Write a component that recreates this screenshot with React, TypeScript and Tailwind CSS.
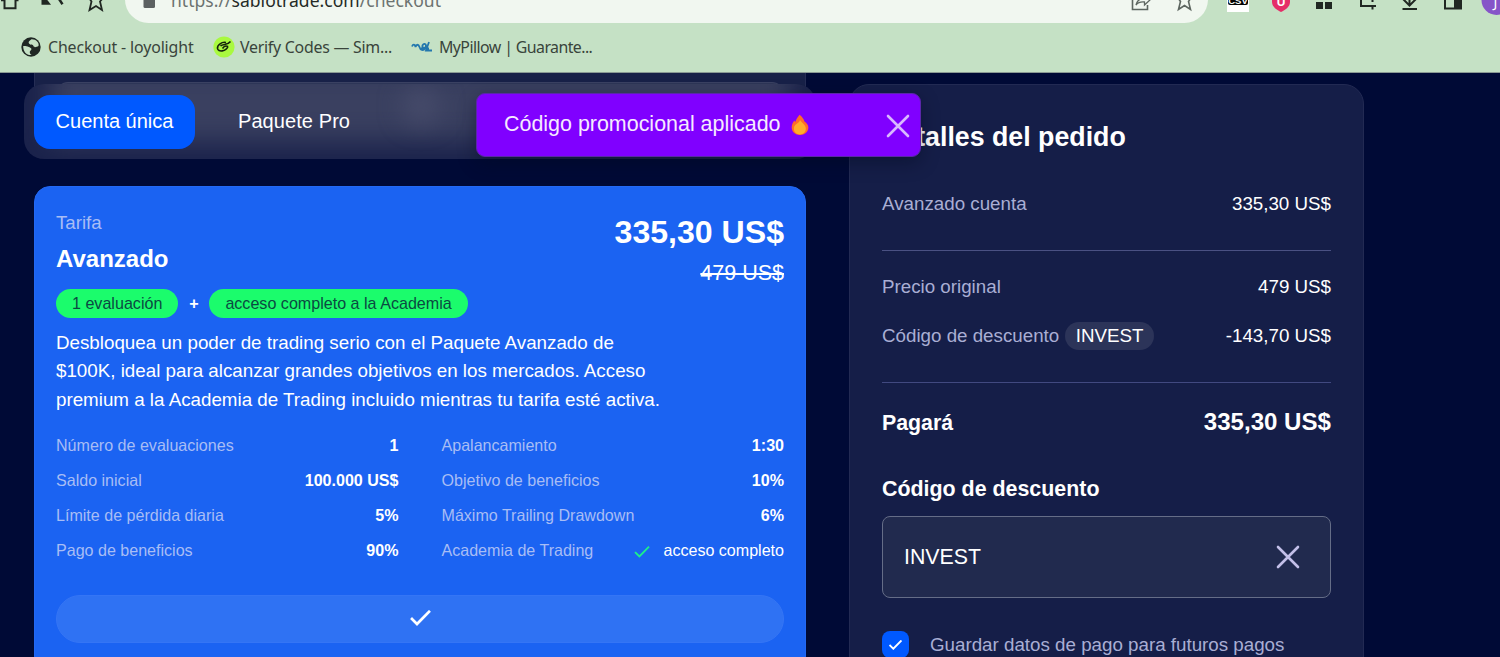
import type { ReactNode } from "react";

type Stat = { label: string; value: string };

const leftStats: Stat[] = [
  { label: "Número de evaluaciones", value: "1" },
  { label: "Saldo inicial", value: "100.000 US$" },
  { label: "Límite de pérdida diaria", value: "5%" },
  { label: "Pago de beneficios", value: "90%" },
];

const rightStats: Stat[] = [
  { label: "Apalancamiento", value: "1:30" },
  { label: "Objetivo de beneficios", value: "10%" },
  { label: "Máximo Trailing Drawdown", value: "6%" },
];

const Cross = ({ className }: { className: string }) => (
  <svg viewBox="0 0 24 24" className={className} fill="none" stroke="currentColor" strokeWidth="2.6" strokeLinecap="round">
    <path d="M2 2 22 22M22 2 2 22" />
  </svg>
);

const Check = ({ className }: { className: string }) => (
  <svg viewBox="0 0 20 16" className={className} fill="none" stroke="currentColor" strokeLinecap="square">
    <path d="M1.5 9 6.5 14 18.5 1.8" />
  </svg>
);

const Flame = () => (
  <svg viewBox="0 0 20 23" className="w-[18px] h-[22px]">
    <path d="M9.500 0C12.500 2.500 14 4.500 15 7.500C17.500 9 19.300 11.500 19.300 14.500C19 19.500 15 22.500 10 22.500C5 22.500 1 19.500 .8 14.500C.7 11.500 2 8.500 3.800 6.500C4 7.300 4.400 7.800 5 8C5.500 5 7.500 2.500 9.500 0Z" fill="#ff6a2b" />
    <path d="M10 6C12 9 16.500 11.500 16.500 15.500C16.500 19.500 13.800 22 10 22C6 22 3.200 19.500 3.200 15.500C3.200 13 4.500 11.500 6 10.500C7.500 9.500 9.300 8.500 10 6Z" fill="#ffad2b" />
  </svg>
);

const Toolbar = () => (
  <div className="flex h-[23px] overflow-hidden text-[#202722]">
    <div className="w-[125px] shrink-0">
      <svg width="125" height="23" fill="none" stroke="currentColor" strokeWidth="2">
        <path d="M4.500 -2V8.200H15.500V-2M1 .3H5M15 .3H18.500" />
        <path d="M41.500 -3H45L51 4.700H41.500Z" fill="currentColor" stroke="none" />
        <path d="M57 -4 62.500 4.200" strokeWidth="2.500" />
        <path d="M89 -2 91.500 1.500 89.500 10 96 6 102 10 100 1.500 103 -2" strokeWidth="1.800" />
      </svg>
    </div>
    <div className="w-[1083px] h-[47px] -mt-[24px] shrink-0 rounded-full bg-[#f1f7f0] flex items-end">
      <svg width="46" height="23" className="shrink-0">
        <rect x="18.500" y="-8" width="11.500" height="16" rx="1.500" fill="#5c6161" />
      </svg>
      <p className="h-[35px] w-[960px] text-[17.5px] tracking-[0.03px] leading-[24px] font-['Noto_Sans'] text-[#6c7370] whitespace-nowrap">
        https://<span className="text-[#252b27]">sabiotrade.com</span>/checkout
      </p>
      <svg width="77" height="23" className="shrink-0" fill="none" stroke="#5d6660" strokeWidth="1.600">
        <path d="M1.500 -2V9.500H16.500V5" />
        <path d="M5 5C6 1 9 -1.500 12.500 -1.500V-6L20 -1 13.500 5V2C9 1.500 7 2.500 5 5Z" strokeWidth="1.300" />
        <path d="M47 -2 49.500 1.500 47.500 9.500 53.500 5.500 59.500 9.500 57.500 1.500 60 -2" />
      </svg>
    </div>
    <div className="flex grow">
      <svg width="292" height="23">
        <rect x="19" y="-4" width="22" height="16" fill="#fff" />
        <rect x="20" y="-10" width="20" height="15" rx="2" fill="#050505" />
        <text x="30" y="3.500" fill="#fff" fontSize="9.500" fontWeight="700" fontFamily="Liberation Sans" textAnchor="middle">CSV</text>
        <path d="M64 -4H82V2C82 7 77 10 73 12C69 10 64 7 64 2Z" fill="#e52d68" />
        <text x="73" y="6" fill="#fff" fontSize="12" fontWeight="700" fontFamily="Liberation Sans" textAnchor="middle">U</text>
        <path d="M108 2h7v7h-7zM117 2h7v7h-7z" fill="#202722" />
        <g fill="none" stroke="#202722" strokeWidth="2">
          <path d="M153 -4V6H168M164.500 -4V2M164.500 5V9.500" />
          <path d="M201.500 -4V5M195 -1 201.500 5.500 208 -1M194.500 9H209" />
          <path d="M237 -4V8.500H253V-4" />
        </g>
        <rect x="246" y="-4" width="7" height="13" fill="#202722" />
        <circle cx="288.500" cy="0" r="15" fill="#8654c8" />
        <text x="285.500" y="6.500" fill="#fff" fontSize="14" fontFamily="Noto Sans">J</text>
      </svg>
    </div>
  </div>
);

const Bookmarks = () => (
  <div className="flex h-[48px] items-center pl-[21px] text-[15.9px] leading-[22px] font-['Noto_Sans'] text-[#39443b] whitespace-nowrap">
    <div className="flex w-[192px] items-center">
      <svg viewBox="0 0 20 20" className="w-5 h-5 mr-[7px]">
        <circle cx="10" cy="10" r="9.700" fill="#1f2723" />
        <path d="M10.500 2.200C8 4 7 5 8 6.500C9.500 8.500 12 7 12.500 9C13 11 15.500 10 17.500 9C18.500 5.500 15 2 10.500 2.200Z" fill="#c5e1c5" />
        <path d="M2.200 9C5 9 8.500 9.500 10 11.200C11.500 13 8.500 13.500 8.800 15.500C9 17 10 17.500 10.500 18C6 18.500 2 15 2.200 9Z" fill="#c5e1c5" />
      </svg>
      <span className="tracking-[-0.13px]">Checkout - loyolight</span>
    </div>
    <div className="flex w-[198px] items-center">
      <svg viewBox="0 0 22 22" className="w-[22px] h-[22px] mr-[5px]">
        <circle cx="11" cy="11" r="10.600" fill="#a9f93f" />
        <path d="M13 6.500C9 5.500 4 9 4.500 12.500C5 16.500 13 15.500 15 10.500M15 10.500C13 9.500 11 10 9.500 12.500M7.500 10C10 7.500 14.500 9.500 17.500 5.500" fill="none" stroke="#15210c" strokeWidth="1.600" />
      </svg>
      <span className="tracking-[-0.25px]">Verify Codes — Sim...</span>
    </div>
    <div className="flex items-center">
      <svg viewBox="0 0 22 14" className="w-[22px] h-[14px] mr-[6px]" fill="none" stroke="#2377ae" strokeWidth="1.8">
        <path d="M1 6.500C2 4 4 4 4.500 7C5.500 4 7.500 4 8.500 7C9.500 10.500 12 11 14 8.500C10 8 11 3.500 14 4C16 4.500 14.500 8 12.500 10M18 2 15 10.500H21M10 8.500H18" />
      </svg>
      <span className="tracking-[-0.58px]">MyPillow | Guarante...</span>
    </div>
  </div>
);

const StatRow = ({ label, children }: { label: string; children: ReactNode }) => (
  <div className="flex h-[35px] items-center justify-between">
    <span className="text-[#a8bdf5]">{label}</span>
    {children}
  </div>
);

const Tabs = () => (
  <div className="relative -ml-[10px] -mt-[9px] flex h-[75px] w-[792px] items-center overflow-hidden rounded-[20px] bg-[#1a224b] px-[10px] text-[20px] text-white">
    <div className="absolute left-[26px] right-[26px] -top-5 h-[78px] bg-[#3a4060] blur-[14px]" />
    <div className="absolute left-[379px] top-[4px] h-[36px] w-[36px] rounded-full bg-[#474c6b] blur-[12px]" />
    <button className="relative mt-[1px] h-[54px] w-[161px] rounded-[16px] bg-[#0059ff] pb-[2px]">Cuenta única</button>
    <button className="relative ml-[43px] tracking-[0.08px] pb-[1px]">Paquete Pro</button>
  </div>
);

const PlanCard = () => (
  <div className="mt-[27px] h-[486px] w-[772px] rounded-[16px] border border-[#2369f4] bg-[#1b63f2] px-[21px] pt-[22px] text-white">
    <div className="flex h-[80px] justify-between">
      <div>
        <p className="text-[18.67px] leading-[28px] text-[#a8bdf5]">Tarifa</p>
        <p className="mt-[6px] text-[24px] font-bold leading-[32px]">Avanzado</p>
      </div>
      <div className="text-right">
        <p className="mt-[2px] text-[32.1px] font-bold leading-[42px]">335,30 US$</p>
        <p className="mt-[4px] text-[21.5px] leading-[32px] line-through">479 US$</p>
      </div>
    </div>
    <div className="flex h-[29px] items-center text-[16.1px] leading-[28px]">
      <span className="h-[29px] rounded-full bg-[#1bfc6c] px-[16px] text-[#0b4a42]">1 evaluación</span>
      <span className="w-[31px] pb-[2px] text-center font-bold">+</span>
      <span className="h-[29px] rounded-full bg-[#1bfc6c] px-[16px] text-[#0b4a42]">acceso completo a la Academia</span>
    </div>
    <p className="mt-[11px] w-[620px] text-[18.77px] leading-[28.3px]">
      Desbloquea un poder de trading serio con el Paquete Avanzado de
      <br />
      $100K, ideal para alcanzar grandes objetivos en los mercados. Acceso
      <br />
      premium a la Academia de Trading incluido mientras tu tarifa esté activa.
    </p>
    <div className="mt-[14px] grid grid-cols-2 gap-x-[43px] text-[16.07px]">
      <div>
        {leftStats.map(s => (
          <StatRow key={s.label} label={s.label}>
            <span className="font-bold">{s.value}</span>
          </StatRow>
        ))}
      </div>
      <div>
        {rightStats.map(s => (
          <StatRow key={s.label} label={s.label}>
            <span className="font-bold">{s.value}</span>
          </StatRow>
        ))}
        <StatRow label="Academia de Trading">
          <span className="flex items-center">
            <Check className="mr-[13px] mt-[3px] h-[12px] w-[16px] stroke-[2.4] text-[#1cf08a]" />
            acceso completo
          </span>
        </StatRow>
      </div>
    </div>
    <div className="mt-[27.5px] flex h-[48px] items-center justify-center rounded-full border border-[#3575f5] bg-[#2f72f3] pb-[3px]">
      <Check className="h-[16px] w-[21px] stroke-[2.7]" />
    </div>
  </div>
);

const OrderDetails = () => (
  <div className="ml-[43px] mt-[11px] h-[620px] w-[515px] rounded-[20px] border border-[#222a53] bg-[#151e48] px-[32px] text-[18.75px] text-white">
    <h2 className="mt-[32px] text-[26.75px] font-bold leading-[40px]">Detalles del pedido</h2>
    <div className="mt-[34px] flex h-[26px] items-center justify-between">
      <span className="text-[#a9aed4]">Avanzado cuenta</span>
      <span>335,30 US$</span>
    </div>
    <div className="mt-[33px] h-px bg-[#4a5183]" />
    <div className="mt-[23px] flex h-[26px] items-center justify-between">
      <span className="text-[#a9aed4]">Precio original</span>
      <span>479 US$</span>
    </div>
    <div className="mt-[22px] flex h-[28px] items-center justify-between">
      <span className="flex items-center text-[#a9aed4]">
        Código de descuento
        <span className="ml-[6px] h-[28px] w-[89px] rounded-full bg-[#2c3459] text-center leading-[28px] text-white">INVEST</span>
      </span>
      <span>-143,70 US$</span>
    </div>
    <div className="mt-[32px] h-px bg-[#414980]" />
    <div className="mt-[23px] flex h-[32px] items-center justify-between font-bold">
      <span className="pt-[3px] text-[21.33px]">Pagará</span>
      <span className="pt-[1px] text-[24.1px]">335,30 US$</span>
    </div>
    <p className="mt-[35px] text-[21.4px] font-bold leading-[32px]">Código de descuento</p>
    <div className="mt-[11px] flex h-[82px] items-center justify-between rounded-[8px] border border-[#656d87] bg-[#212a4e] pl-[21px] pr-[30px] text-[21.33px]">
      <span className="pt-[2px]">INVEST</span>
      <Cross className="h-[24px] w-[24px] text-[#c3bfe8]" />
    </div>
    <div className="mt-[33px] flex h-[27px] items-center">
      <span className="mr-[21px] flex h-[27px] w-[27px] items-center justify-center rounded-[8px] bg-[#0059ff]">
        <Check className="h-[10px] w-[13px] stroke-3" />
      </span>
      <span className="pt-[1px] text-[#a9aed4]">Guardar datos de pago para futuros pagos</span>
    </div>
  </div>
);

const Toast = () => (
  <div className="absolute left-[476px] top-[93px] flex h-[64px] w-[445px] items-center rounded-[9px] border border-[#5a27a8] bg-[#8000ff] pl-[27px] pr-[10px] text-[21.45px] text-[#f6eaff] shadow-[0_6px_18px_rgba(0,10,30,0.4)]">
    <span className="mr-[11px] pb-[1px] whitespace-nowrap">Código promocional aplicado</span>
    <Flame />
    <Cross className="ml-auto mt-[1px] h-[24px] w-[24px] text-[#d9b8ff]" />
  </div>
);

const App = () => {
  return (
    <div className="relative h-[657px] w-[1500px] overflow-hidden bg-[#000a36] font-['Liberation_Sans',sans-serif]">
      <div className="h-[73px] border-b border-[#8a9a94] bg-[#c5e1c5]">
        <Toolbar />
        <Bookmarks />
      </div>
      <div className="flex pl-[34px]">
        <div className="w-[772px]">
          <div className="h-[20px] border-x border-[#252d55] bg-[#182148]">
            <div className="mx-[22px] h-[11px] translate-y-[9px] rounded-t-[20px] border-t border-[#3a4162] bg-[#2d3557]" />
          </div>
          <Tabs />
          <PlanCard />
        </div>
        <OrderDetails />
      </div>
      <Toast />
    </div>
  );
};

export default App;
